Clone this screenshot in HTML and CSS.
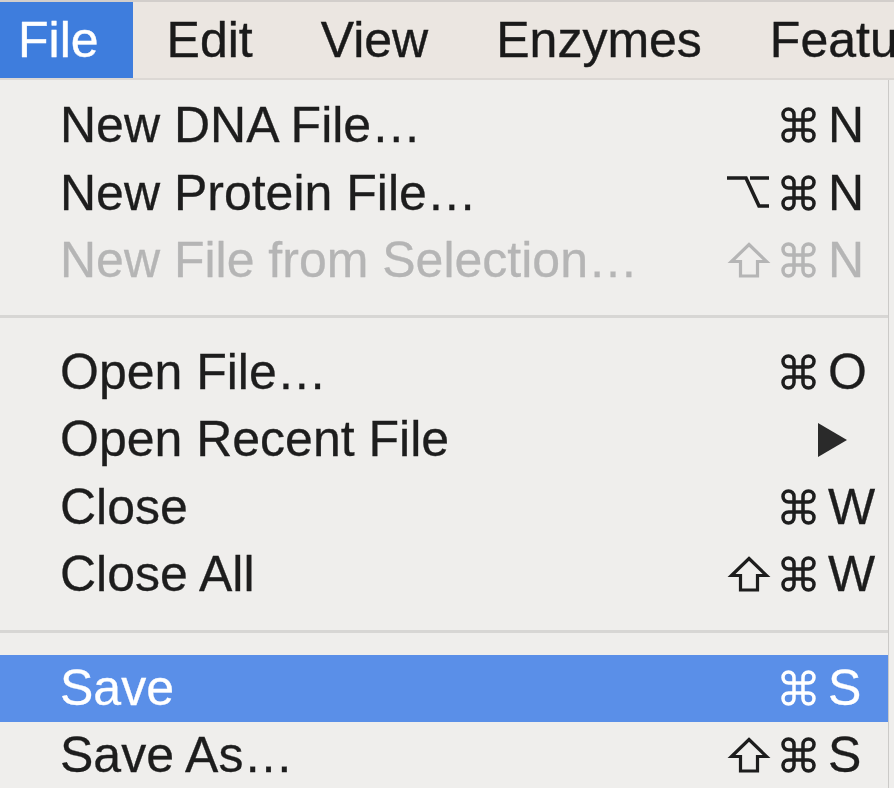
FILE: index.html
```html
<!DOCTYPE html>
<html lang="en">
<head>
<meta charset="utf-8">
<title>File menu</title>
<link rel="stylesheet" href="styles.css">
</head>
<body>
<div class="menubar">
  <span class="bar-item active">File</span>
  <span class="bar-item">Edit</span>
  <span class="bar-item">View</span>
  <span class="bar-item">Enzymes</span>
  <span class="bar-item">Features</span>
</div>
<div class="menu">
  <div class="row">
    <span class="label">New DNA File…</span>
    <span class="mods"><svg class="g cmd" viewBox="0 0 35 36"><path d="M22 7.5V28.5A5.5 5.5 0 1 0 27.5 23H7.5A5.5 5.5 0 1 0 13 28.5V7.5A5.5 5.5 0 1 0 7.5 13H27.5A5.5 5.5 0 1 0 22 7.5Z"/></svg></span>
    <span class="key">N</span>
  </div>
  <div class="row">
    <span class="label">New Protein File…</span>
    <span class="mods"><svg class="g opt" viewBox="0 0 42 34"><path d="M0 3H19L32 31H42M23 3H42"/></svg><svg class="g cmd" viewBox="0 0 35 36"><path d="M22 7.5V28.5A5.5 5.5 0 1 0 27.5 23H7.5A5.5 5.5 0 1 0 13 28.5V7.5A5.5 5.5 0 1 0 7.5 13H27.5A5.5 5.5 0 1 0 22 7.5Z"/></svg></span>
    <span class="key">N</span>
  </div>
  <div class="row disabled">
    <span class="label">New File from Selection…</span>
    <span class="mods"><svg class="g shift" viewBox="0 0 40 36"><path d="M20 2.5L37.5 19.5H28.5V34H11.5V19.5H2.5Z"/></svg><svg class="g cmd" viewBox="0 0 35 36"><path d="M22 7.5V28.5A5.5 5.5 0 1 0 27.5 23H7.5A5.5 5.5 0 1 0 13 28.5V7.5A5.5 5.5 0 1 0 7.5 13H27.5A5.5 5.5 0 1 0 22 7.5Z"/></svg></span>
    <span class="key">N</span>
  </div>
  <div class="sep"></div>
  <div class="row">
    <span class="label">Open File…</span>
    <span class="mods"><svg class="g cmd" viewBox="0 0 35 36"><path d="M22 7.5V28.5A5.5 5.5 0 1 0 27.5 23H7.5A5.5 5.5 0 1 0 13 28.5V7.5A5.5 5.5 0 1 0 7.5 13H27.5A5.5 5.5 0 1 0 22 7.5Z"/></svg></span>
    <span class="key">O</span>
  </div>
  <div class="row">
    <span class="label">Open Recent File</span>
    <span class="submenu"></span>
  </div>
  <div class="row">
    <span class="label">Close</span>
    <span class="mods"><svg class="g cmd" viewBox="0 0 35 36"><path d="M22 7.5V28.5A5.5 5.5 0 1 0 27.5 23H7.5A5.5 5.5 0 1 0 13 28.5V7.5A5.5 5.5 0 1 0 7.5 13H27.5A5.5 5.5 0 1 0 22 7.5Z"/></svg></span>
    <span class="key">W</span>
  </div>
  <div class="row">
    <span class="label">Close All</span>
    <span class="mods"><svg class="g shift" viewBox="0 0 40 36"><path d="M20 2.5L37.5 19.5H28.5V34H11.5V19.5H2.5Z"/></svg><svg class="g cmd" viewBox="0 0 35 36"><path d="M22 7.5V28.5A5.5 5.5 0 1 0 27.5 23H7.5A5.5 5.5 0 1 0 13 28.5V7.5A5.5 5.5 0 1 0 7.5 13H27.5A5.5 5.5 0 1 0 22 7.5Z"/></svg></span>
    <span class="key">W</span>
  </div>
  <div class="sep sep2"></div>
  <div class="row selected">
    <span class="label">Save</span>
    <span class="mods"><svg class="g cmd" viewBox="0 0 35 36"><path d="M22 7.5V28.5A5.5 5.5 0 1 0 27.5 23H7.5A5.5 5.5 0 1 0 13 28.5V7.5A5.5 5.5 0 1 0 7.5 13H27.5A5.5 5.5 0 1 0 22 7.5Z"/></svg></span>
    <span class="key">S</span>
  </div>
  <div class="row">
    <span class="label">Save As…</span>
    <span class="mods"><svg class="g shift" viewBox="0 0 40 36"><path d="M20 2.5L37.5 19.5H28.5V34H11.5V19.5H2.5Z"/></svg><svg class="g cmd" viewBox="0 0 35 36"><path d="M22 7.5V28.5A5.5 5.5 0 1 0 27.5 23H7.5A5.5 5.5 0 1 0 13 28.5V7.5A5.5 5.5 0 1 0 7.5 13H27.5A5.5 5.5 0 1 0 22 7.5Z"/></svg></span>
    <span class="key">S</span>
  </div>
</div>
</body>
</html>
```
FILE: styles.css
```css
html, body {
  margin: 0;
  padding: 0;
  background: #efeeec;
  overflow: hidden;
}
body {
  width: 894px;
  height: 788px;
  font-family: "Liberation Sans", Arial, sans-serif;
  color: #1d1d1d;
}
.menubar {
  display: flex;
  height: 76px;
  border-top: 2px solid #d2cecb;
  border-bottom: 2px solid #dcd8d4;
  background: #ebe6e1;
  white-space: nowrap;
  overflow: hidden;
  font-size: 50px;
  line-height: 76px;
  -webkit-text-stroke: 0.4px currentColor;
}
.bar-item {
  padding: 0 34px;
  color: #1a1a1a;
}
.bar-item:first-child {
  margin-left: -16px;
}
.bar-item.active {
  background: #3e7ddd;
  color: #ffffff;
}
.menu {
  width: 889px;
  height: 708px;
  box-sizing: border-box;
  padding-top: 12px;
  border-right: 1px solid #cbcac8;
  background: #efeeec;
  font-size: 50px;
  -webkit-text-stroke: 0.3px currentColor;
}
.row {
  display: grid;
  grid-template-columns: 1fr auto 48px;
  align-items: start;
  height: 67.5px;
  line-height: 67.5px;
  padding-left: 60px;
  padding-right: 12px;
  white-space: nowrap;
}
.mods {
  justify-self: end;
  display: flex;
  align-items: flex-end;
  gap: 12px;
  height: 37px;
  margin-top: 15px;
  margin-right: 12px;
}
.g {
  display: block;
  fill: none;
  stroke: currentColor;
  overflow: visible;
}
.cmd {
  width: 35px;
  height: 36px;
  margin-bottom: 1px;
  stroke-width: 3.5px;
}
.opt {
  width: 42px;
  height: 34px;
  margin-bottom: 3px;
  stroke-width: 3.6px;
}
.shift {
  width: 40px;
  height: 36px;
  margin-bottom: 1px;
  stroke-width: 3.2px;
  stroke-linejoin: miter;
}
.key {
  justify-self: start;
}
.row.disabled {
  color: #b5b5b5;
}
.row.selected {
  background: #5a8fe8;
  color: #ffffff;
}
.submenu {
  grid-column: 2 / 4;
  justify-self: end;
  align-self: center;
  width: 0;
  height: 0;
  margin-right: 29px;
  border-top: 17px solid transparent;
  border-bottom: 17px solid transparent;
  border-left: 29px solid #2a2a2a;
}
.sep {
  height: 44px;
  display: flex;
  align-items: center;
}
.sep::before {
  content: "";
  flex: 1;
  height: 3px;
  background: #d7d6d4;
}
.sep2 {
  height: 46px;
}
```
